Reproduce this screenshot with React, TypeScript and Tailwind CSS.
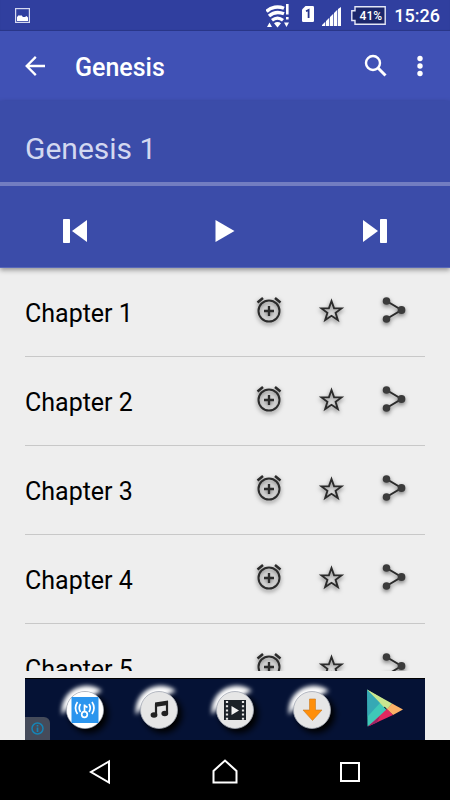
import { useState } from 'react';
import type { ReactNode } from 'react';

const CHAPTERS = [1, 2, 3, 4, 5];

function StatusBar() {
  return (
    <div className="flex h-[31px] shrink-0 items-center justify-between bg-[#303f9f] pl-[15px] pr-[10px] text-white shadow-[inset_0_-1px_1px_rgba(0,0,0,0.15)]">
      <svg width="15" height="15" viewBox="0 0 15 15" aria-hidden="true">
        <rect x="0.6" y="0.6" width="13.8" height="13.8" fill="none" stroke="#d5d9f0" strokeWidth="1.2" />
        <path d="M2 13V9l2-2 1 1 1-1 2 2 2 0 1.500-1 1.500 1.500V13z" fill="#fff" />
      </svg>
      <div className="flex items-center">
        {/* wifi with activity marks */}
        <svg width="24" height="24" viewBox="0 0 24 24" fill="none" stroke="#fff" aria-hidden="true">
          <path d="M0.500 7.500C5 2.800 12 1.800 18 4.300" strokeWidth="3.400" />
          <path d="M3 12C7.500 8 12.500 7.500 18 9.800" strokeWidth="3.400" />
          <path d="M6 16.300C9.500 13.500 13.500 13.500 17 16.300" strokeWidth="3.200" />
          <path d="M8 19.200c2-1.700 5-1.700 7 0L11.500 23.500z" fill="#fff" stroke="none" />
          <path d="M20 0h2.600v10.500H20zM20 13h2.600v2.500H20z" fill="#fff" stroke="none" />
          <path d="M1 23l2.500-4.500L6 23zM18 18.500h5L20.500 23z" fill="#fff" stroke="none" />
        </svg>
        <svg className="mb-1 ml-3" width="12" height="16" viewBox="0 0 12 16" aria-hidden="true">
          <path d="M3.500 0H10.800Q12 0 12 1.200V14.800Q12 16 10.800 16H1.200Q0 16 0 14.800V3.500z" fill="#fff" />
          <path d="M4 5.200L6.600 4V12" fill="none" stroke="#26348c" strokeWidth="1.800" />
        </svg>
        <svg className="ml-2 mt-[2px]" width="19" height="19" viewBox="0 0 19 19" fill="#fff" aria-hidden="true">
          <path d="M0 19v-1l3.300-3.300V19zM4 19v-5l3.300-3.300V19zM8 19v-9l3.300-3.300V19zM12 19V6l3.300-3.300V19zM16 19V2L19 0v19z" />
        </svg>
        <div className="relative ml-[10px] flex h-[19px] w-[35px] items-center justify-center pl-1">
          <svg className="absolute inset-0" width="35" height="19" viewBox="0 0 35 19" aria-hidden="true">
            <path d="M4 .8H34.200V18.200H4V14.500H.8V4.800H4z" fill="#1c276b" stroke="#e4e7f7" strokeWidth="1.400" />
          </svg>
          <span className="relative text-[12px] font-medium leading-none">41%</span>
        </div>
        <span className="ml-2 text-[18px] font-medium leading-none">15:26</span>
      </div>
    </div>
  );
}

function Toolbar() {
  return (
    <header className="flex h-[70px] shrink-0 items-center bg-[#4051b5] text-white">
      <button type="button" aria-label="Back" className="ml-[19px] flex size-8 items-center justify-center">
        <svg width="20" height="20" viewBox="0 0 20 20" fill="none" stroke="currentColor" strokeWidth="2.300" aria-hidden="true">
          <path d="M20 10H2M10.800 .9L1.700 10l9.100 9.100" />
        </svg>
      </button>
      <h1 className="ml-6 mt-1 flex-1 text-[25px] font-medium leading-8">Genesis</h1>
      <button type="button" aria-label="Search" className="flex size-8 items-center justify-center">
        <svg width="24" height="24" viewBox="0 0 24 24" fill="none" stroke="currentColor" aria-hidden="true">
          <circle cx="9" cy="9" r="7" strokeWidth="2.400" />
          <path d="M13.800 13.800L21.500 21.500" strokeWidth="3" />
        </svg>
      </button>
      <button type="button" aria-label="More options" className="ml-3 mr-[14px] flex size-8 items-center justify-center">
        <svg width="6" height="22" viewBox="0 0 6 22" fill="currentColor" aria-hidden="true">
          <circle cx="3" cy="3.500" r="2.700" />
          <circle cx="3" cy="11" r="2.700" />
          <circle cx="3" cy="18.500" r="2.700" />
        </svg>
      </button>
    </header>
  );
}

function Player({ chapter }: { chapter: number }) {
  return (
    <section className="relative shrink-0 bg-[#3b4ca9] text-white shadow-[0_2px_5px_rgba(0,0,0,0.4)]">
      <div className="flex h-[81px] items-center px-[25px] pt-[14px]">
        <h2 className="text-[30px] leading-9 text-[#d3d8f0]">Genesis {chapter}</h2>
      </div>
      <div className="h-1 bg-[#727dc1]" />
      <div className="grid h-[82px] grid-cols-3 border-b border-[#5868b8] pt-[9px]">
        <button type="button" aria-label="Previous chapter" className="flex items-center justify-center">
          <svg width="24" height="24" viewBox="0 0 24 24" fill="currentColor" aria-hidden="true">
            <rect width="7" height="24" rx="0.800" />
            <path d="M24 1v22L9 12z" />
          </svg>
        </button>
        <button type="button" aria-label="Play" className="flex items-center justify-center">
          <svg width="20" height="24" viewBox="0 0 20 24" fill="currentColor" aria-hidden="true">
            <path d="M0.500 1v22L19.500 12z" />
          </svg>
        </button>
        <button type="button" aria-label="Next chapter" className="flex items-center justify-center">
          <svg width="24" height="24" viewBox="0 0 24 24" fill="currentColor" aria-hidden="true">
            <rect x="17" width="7" height="24" rx="0.800" />
            <path d="M0 1v22L15 12z" />
          </svg>
        </button>
      </div>
    </section>
  );
}

function RowButton({ label, children }: { label: string; children: ReactNode }) {
  return (
    <button type="button" aria-label={label} className="flex h-12 w-[63px] items-center justify-center text-[#2b2b2b]">
      <svg
        className="overflow-visible drop-shadow-[0_2px_2px_rgba(0,0,0,0.5)]"
        width="26"
        height="26"
        viewBox="0 0 26 26"
        fill="none"
        stroke="currentColor"
        strokeWidth="2"
        aria-hidden="true"
      >
        {children}
      </svg>
    </button>
  );
}

function ChapterRow({ chapter, onSelect }: { chapter: number; onSelect: (chapter: number) => void }) {
  return (
    <li className="flex h-[89px] shrink-0 items-center border-b border-[#c8c8c8]">
      <button type="button" onClick={() => onSelect(chapter)} className="mt-1 flex-1 text-left text-[25px] leading-8 text-black">
        Chapter {chapter}
      </button>
      <div className="flex pb-1">
        <RowButton label={`Set reminder for chapter ${chapter}`}>
          <circle cx="14" cy="14" r="10.500" fill="#000" fillOpacity="0.03" />
          <path d="M14 9v10M9 14h10" strokeWidth="2.300" />
          <path d="M2.500 5.500L8 1M20 1l5.500 4.500" strokeWidth="2.500" />
        </RowButton>
        <RowButton label={`Add chapter ${chapter} to favourites`}>
          <path d="M13.500 4l2.600 7.200 7.400.2-5.900 4.400 2.200 7.200-6.300-4.200L7.200 23l2.200-7.200-5.900-4.400 7.400-.2z" strokeWidth="1.900" />
        </RowButton>
        <RowButton label={`Share chapter ${chapter}`}>
          <path d="M5.500 4L20.500 13 5.500 22" />
          <g fill="#3b3b3b" stroke="none">
            <circle cx="5.500" cy="4" r="3.800" />
            <circle cx="20.500" cy="13" r="3.900" />
            <circle cx="5.500" cy="22" r="3.800" />
          </g>
        </RowButton>
      </div>
    </li>
  );
}

function Knob({ cx, children }: { cx: number; children: ReactNode }) {
  return (
    <>
      <circle cx={cx + 4} cy="35" r="19" fill="#000" filter="url(#soft)" />
      {/* highlight that catches the top left of the knob */}
      <path
        d={`M${cx - 23} 36A25 25 0 0 1 ${cx + 17} 12L${cx} 20L${cx - 16} 28z`}
        fill="#fff"
        filter="url(#glow)"
      />
      <circle cx={cx} cy="31" r="18.500" fill="#e6e6e6" stroke="#a3a8b4" strokeWidth="0.800" />
      {children}
    </>
  );
}

function AdButton({ label, children }: { label: string; children: ReactNode }) {
  return (
    <a href="#ad" aria-label={label} className="flex justify-center">
      <svg className="overflow-visible" width="75" height="62" viewBox="0 0 75 62" aria-hidden="true">
        {children}
      </svg>
    </a>
  );
}

function AdBanner() {
  return (
    <aside className="relative mx-[25px] mt-[7px] h-[62px] shrink-0 overflow-hidden border-t border-black bg-[#051235]">
      <svg className="absolute size-0" aria-hidden="true">
        <defs>
          <filter id="soft" x="-50%" y="-50%" width="200%" height="200%">
            <feGaussianBlur stdDeviation="3" />
          </filter>
          <filter id="glow" x="-50%" y="-50%" width="200%" height="200%">
            <feGaussianBlur stdDeviation="2.300" />
          </filter>
        </defs>
      </svg>
      <div className="grid grid-cols-5 pl-[22px] pr-[3px]">
        <AdButton label="Podcasts">
          <Knob cx={38}>
            <circle cx="38" cy="31" r="18" fill="#fff" />
            <rect x="24.500" y="18" width="27" height="26" fill="#2b95ee" />
            <g fill="none" stroke="#fff" strokeWidth="1.700">
              <circle cx="37.500" cy="35.500" r="2.800" />
              <path d="M37.500 32.500V25.500M37.500 26.500L40.500 28.500" />
              <path d="M33.500 25Q31 29 33.500 33M30.500 23Q26.500 29 30.500 35M42 25Q44.500 29 42 33M45 23Q49 29 45 35" />
            </g>
          </Knob>
        </AdButton>
        <AdButton label="Music">
          <Knob cx={37}>
            <path d="M34 25L45 23.500V34M34 35.500V25" fill="none" stroke="#222" strokeWidth="2.200" />
            <path d="M33 23.500L46 21.500V26L33 28z" fill="#222" />
            <ellipse cx="32" cy="36" rx="3.400" ry="2.700" fill="#222" />
            <ellipse cx="42.800" cy="34.500" rx="3.400" ry="2.700" fill="#222" />
          </Knob>
        </AdButton>
        <AdButton label="Videos">
          <Knob cx={38}>
            <rect x="27" y="21" width="22" height="20" fill="#1c2228" />
            <path d="M30 22V41M46 22V41" stroke="#e6e6e6" strokeWidth="2.200" strokeDasharray="2 2.200" />
            <path d="M34.500 27V36L42 31.500z" fill="#f2f2f2" />
          </Knob>
        </AdButton>
        <AdButton label="Downloads">
          <Knob cx={40}>
            <path d="M37.500 20h6v11H50L40.500 41.500 31 31h6.500z" fill="#ff8f0a" stroke="#c77a22" strokeWidth="0.600" />
          </Knob>
        </AdButton>
        <AdButton label="Play Store">
          <path d="M20 10.500L43 24.500 32 31 20 10.500z" fill="#bfe48f" />
          <path d="M20 10.500L41.500 33 20.500 47.500z" fill="#3fc9b8" />
          <path d="M20 10.500L33 24 20.200 38z" fill="#3195b1" fillOpacity="0.600" />
          <path d="M45 24.500L56 30.500 46 36 39.500 30z" fill="#fbb167" />
          <path d="M20 10.500L45 24.500 40 30z" fill="#c9e68f" />
          <path d="M40 30L46 36 21 47.500z" fill="#e2295f" />
          <path d="M33 37L21 47.500 30 43.500z" fill="#9f2467" />
        </AdButton>
      </div>
      <button
        type="button"
        aria-label="Ad information"
        className="absolute bottom-0 left-0 flex h-[23px] w-[25px] items-center justify-center rounded-tr-[6px] bg-[#454b5a] text-[#1683b5]"
      >
        <svg width="13" height="13" viewBox="0 0 13 13" fill="none" stroke="currentColor" aria-hidden="true">
          <circle cx="6.500" cy="6.500" r="5.500" strokeWidth="1.500" />
          <path d="M6.500 3v1.500M6.500 5.500V10" strokeWidth="1.700" />
        </svg>
      </button>
    </aside>
  );
}

function NavBar() {
  return (
    <nav className="flex h-[60px] shrink-0 items-center justify-center gap-[93px] bg-black pt-1 text-white">
      <button type="button" aria-label="Back" className="flex w-8 justify-center">
        <svg width="22" height="26" viewBox="0 0 22 26" fill="none" stroke="currentColor" strokeWidth="2" aria-hidden="true">
          <path d="M20 2.500V23.500L2 13z" />
        </svg>
      </button>
      <button type="button" aria-label="Home" className="flex w-8 justify-center">
        <svg width="26" height="26" viewBox="0 0 26 26" fill="none" stroke="currentColor" strokeWidth="2" aria-hidden="true">
          <path d="M1.500 23.500V12L13 1.500 24.500 12V23.500z" />
        </svg>
      </button>
      <button type="button" aria-label="Recent apps" className="flex w-8 justify-center">
        <svg width="20" height="20" viewBox="0 0 20 20" fill="none" stroke="currentColor" strokeWidth="2" aria-hidden="true">
          <rect x="1" y="1" width="18" height="18" />
        </svg>
      </button>
    </nav>
  );
}

export default function App() {
  const [current, setCurrent] = useState(1);

  return (
    <div className="flex h-screen flex-col overflow-hidden bg-[#eeeeee] font-[Roboto,sans-serif]">
      <StatusBar />
      <Toolbar />
      <Player chapter={current} />
      <ul className="flex min-h-0 flex-1 flex-col overflow-hidden px-[25px]">
        {CHAPTERS.map((chapter) => (
          <ChapterRow key={chapter} chapter={chapter} onSelect={setCurrent} />
        ))}
      </ul>
      <AdBanner />
      <NavBar />
    </div>
  );
}
